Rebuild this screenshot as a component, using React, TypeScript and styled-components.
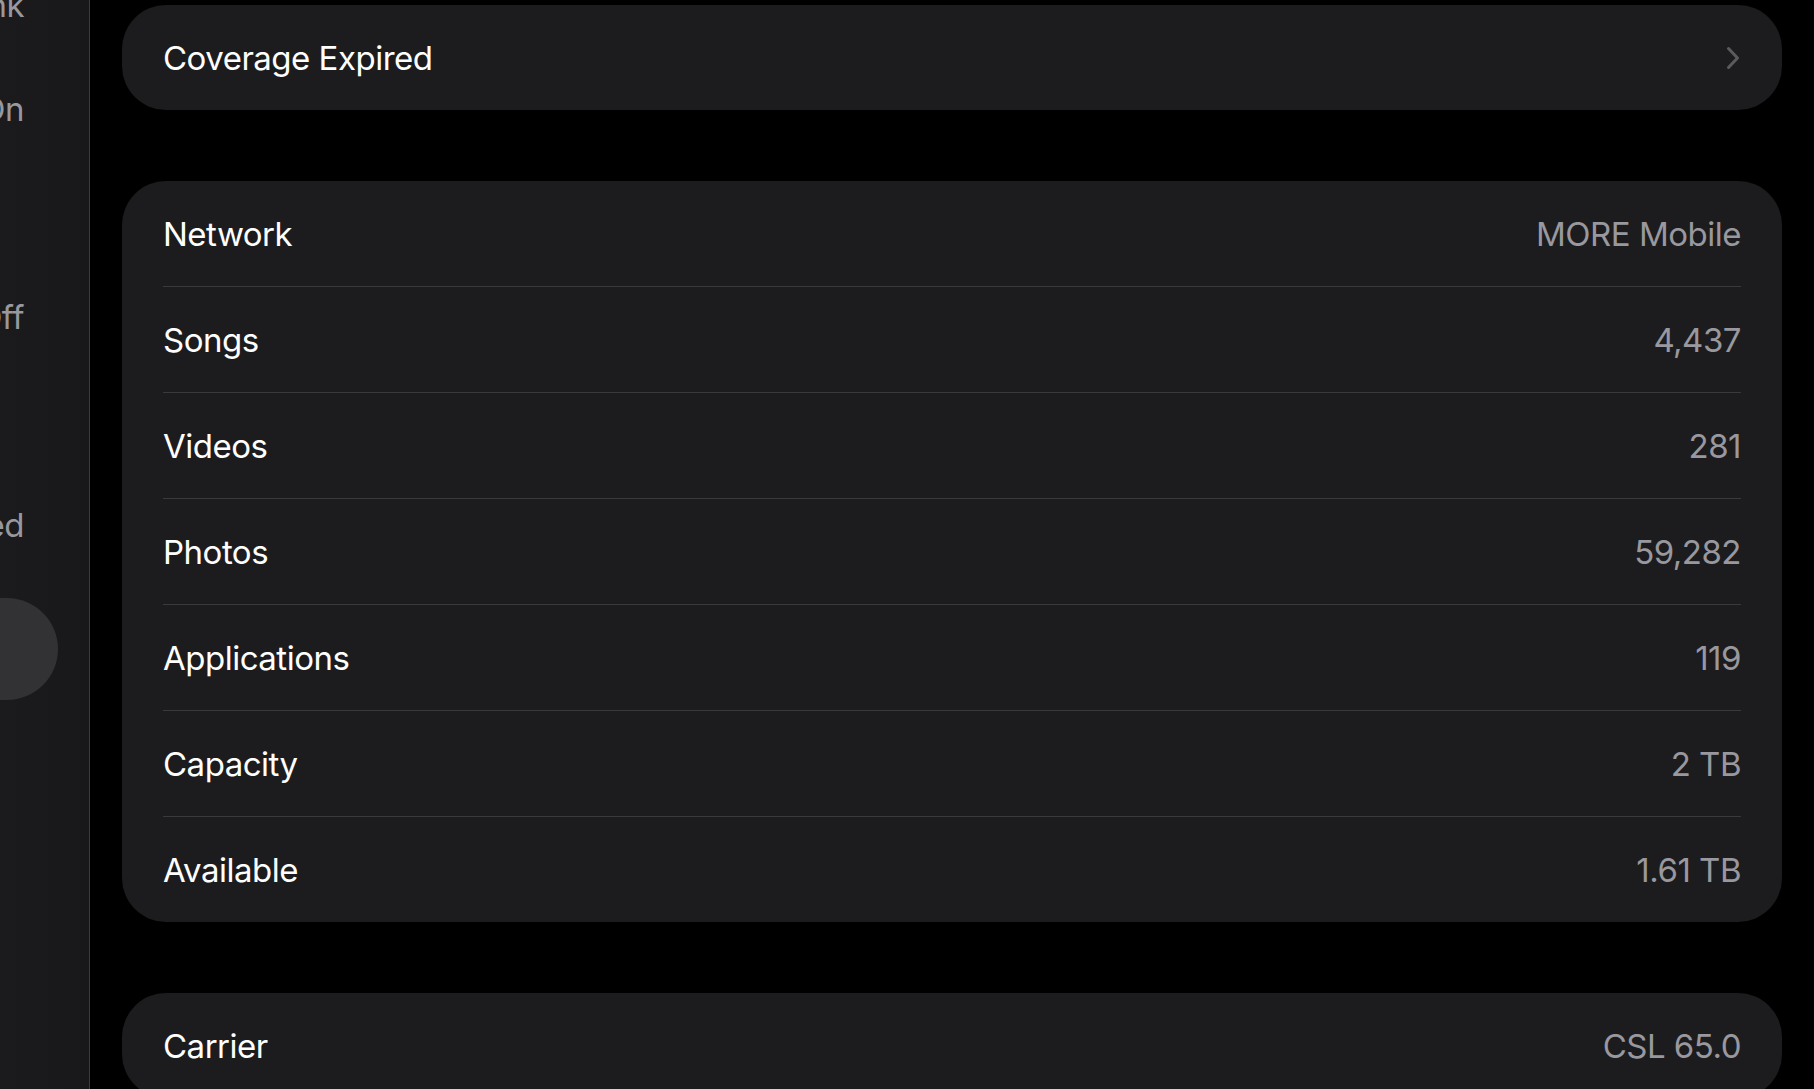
import styled, { createGlobalStyle } from 'styled-components';

const GlobalStyle = createGlobalStyle`
  html, body {
    margin: 0;
    padding: 0;
    background: #000;
    overflow: hidden;
  }
  body {
    font-family: Inter, "Noto Sans", "Liberation Sans", sans-serif;
    -webkit-font-smoothing: antialiased;
  }
`;

const Screen = styled.div`
  display: flex;
  width: 1814px;
  height: 1089px;
  overflow: hidden;
  background: #000;
`;

const Sidebar = styled.aside`
  flex: 0 0 89px;
  height: 100%;
  overflow: hidden;
  background: linear-gradient(90deg, #1b1b1d 0%, #18181a 100%);
  border-right: 1px solid #3b3b3e;
`;

const SidebarList = styled.div`
  width: 420px;
  margin-left: -362px;
  margin-top: -47px;
  display: flex;
  flex-direction: column;
`;

const SidebarRow = styled.div<{ $selected?: boolean }>`
  height: ${p => (p.$selected ? 102 : 104)}px;
  margin-top: ${p => (p.$selected ? 21 : 0)}px;
  display: flex;
  align-items: center;
  justify-content: flex-end;
  padding-right: 34px;
  border-radius: ${p => (p.$selected ? '51px' : '0')};
  background: ${p => (p.$selected ? '#323234' : 'transparent')};
  color: #98989e;
  font-size: 33px;
  letter-spacing: -0.5px;
  white-space: nowrap;
`;

const Content = styled.main`
  flex: 1;
  padding: 5px 32px 0 32px;
  display: flex;
  flex-direction: column;
  gap: 71px;
`;

const Card = styled.section`
  background: #1c1c1e;
  border-radius: 44px;
  padding: 0 41px;
  display: flex;
  flex-direction: column;
`;

const Row = styled.div<{ $last?: boolean }>`
  box-sizing: border-box;
  height: ${p => (p.$last ? 105 : 106)}px;
  display: flex;
  align-items: center;
  justify-content: space-between;
  border-bottom: ${p => (p.$last ? 'none' : '1px solid #3a3a3d')};
  font-size: 33px;
  letter-spacing: -0.5px;
`;

const Label = styled.span`
  color: #ffffff;
`;

const Value = styled.span`
  color: #98989e;
`;

const Chevron = styled.svg`
  width: 14px;
  height: 24px;
  margin-right: 1px;
`;

const details: [string, string][] = [
  ['Network', 'MORE Mobile'],
  ['Songs', '4,437'],
  ['Videos', '281'],
  ['Photos', '59,282'],
  ['Applications', '119'],
  ['Capacity', '2 TB'],
  ['Available', '1.61 TB'],
];

const sidebarItems: { text: string; selected?: boolean }[] = [
  { text: 'Link' },
  { text: 'On' },
  { text: '' },
  { text: 'Off' },
  { text: '' },
  { text: 'Not Connected' },
  { text: '', selected: true },
  { text: '' },
  { text: '' },
];

export default function App() {
  return (
    <>
      <GlobalStyle />
      <Screen>
        <Sidebar>
          <SidebarList>
            {sidebarItems.map((item, i) => (
              <SidebarRow key={i} $selected={item.selected}>
                {item.text}
              </SidebarRow>
            ))}
          </SidebarList>
        </Sidebar>
        <Content>
          <Card>
            <Row $last>
              <Label>Coverage Expired</Label>
              <Chevron viewBox="0 0 14 24" fill="none">
                <path
                  d="M2.5 2.5 L11.5 12 L2.5 21.5"
                  stroke="#5b5b5f"
                  strokeWidth="3"
                  strokeLinecap="round"
                  strokeLinejoin="round"
                />
              </Chevron>
            </Row>
          </Card>
          <Card>
            {details.map(([label, value], i) => (
              <Row key={label} $last={i === details.length - 1}>
                <Label>{label}</Label>
                <Value>{value}</Value>
              </Row>
            ))}
          </Card>
          <Card>
            <Row $last>
              <Label>Carrier</Label>
              <Value>CSL 65.0</Value>
            </Row>
          </Card>
        </Content>
      </Screen>
    </>
  );
}
